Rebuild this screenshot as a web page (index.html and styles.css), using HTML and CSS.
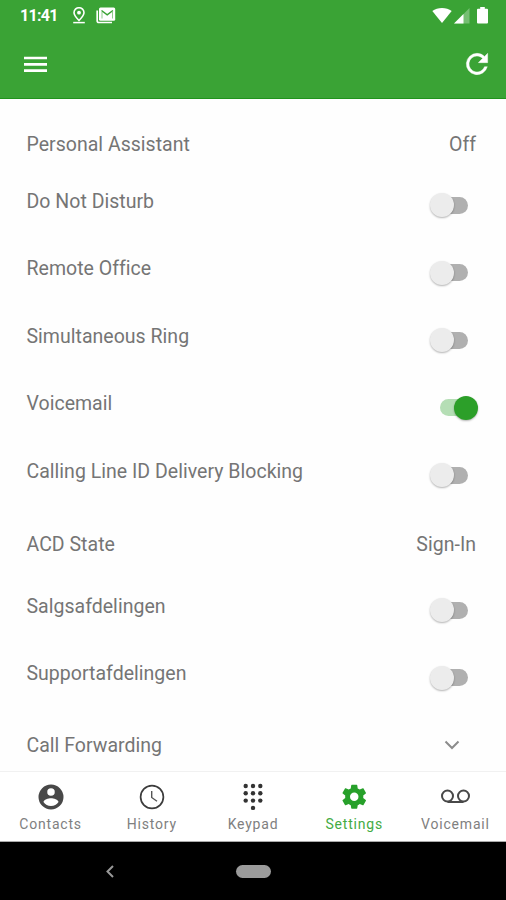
FILE: index.html
```html
<!DOCTYPE html>
<html lang="en">
<head>
    <meta charset="UTF-8">
    <meta name="viewport" content="width=device-width, initial-scale=1.0">
    <title>Settings</title>
    <link rel="stylesheet" href="styles.css">
</head>
<body>
    <header>
        <div class="status_bar">
            <span class="clock">11:41</span>
            <svg class="pin" width="14" height="18" viewBox="0 0 14 18">
                <path d="M7 13.500C4 10.300 2 8 2 5.700a5 5 0 0 1 10 0C12 8 10 10.300 7 13.500z" fill="none" stroke="#fff" stroke-width="1.600"/>
                <circle cx="7" cy="5.700" r="1.900" fill="#fff"/>
                <path d="M1.200 15.600h11.600" stroke="#fff" stroke-width="1.500"/>
            </svg>
            <svg class="mail" width="20" height="18" viewBox="0 0 20 18">
                <path d="M1.200 3.500v10.500a1.500 1.500 0 0 0 1.500 1.500H16" fill="none" stroke="#fff" stroke-width="1.700"/>
                <rect x="3" y=".500" width="16.200" height="13.200" rx="1.500" fill="#fff"/>
                <path d="M6 11.500V5M16.500 11.500V5" stroke="#3aa335" stroke-width=".800" opacity=".7"/>
                <path d="M5.500 3.500l5.700 4.300 5.700-4.300" fill="none" stroke="#3aa335" stroke-width="1.500"/>
            </svg>
            <span class="spacer"></span>
            <svg width="20" height="16" viewBox="0 0 20 16">
                <path d="M10 15L.300 3C5.500-.900 14.500-.900 19.700 3z" fill="#fff"/>
            </svg>
            <svg class="signal" width="16" height="16" viewBox="0 0 16 16">
                <path d="M0 15.500L15.500 0v15.500z" fill="#fff" opacity=".3"/>
                <path d="M0 15.500L9.500 6V15.500z" fill="#fff"/>
            </svg>
            <svg class="battery" width="11" height="17" viewBox="0 0 11 17">
                <path d="M3.200 0h4.600v1.800H10a1 1 0 0 1 1 1V15.500a1 1 0 0 1-1 1H1a1 1 0 0 1-1-1V2.800a1 1 0 0 1 1-1h2.200z" fill="#fff"/>
            </svg>
        </div>
        <div class="toolbar">
            <svg width="23" height="17" viewBox="0 0 23 17">
                <path d="M0 2h23M0 8.300h23M0 14.600h23" stroke="#fff" stroke-width="2.700"/>
            </svg>
            <svg width="32" height="32" viewBox="0 0 24 24">
                <path d="M17.650 6.350A7.958 7.958 0 0 0 12 4a8 8 0 1 0 7.730 10h-2.080A6 6 0 1 1 12 6c1.660 0 3.140.69 4.220 1.780L13 11h7V4z" fill="#fff" stroke="#fff" stroke-width=".3"/>
            </svg>
        </div>
    </header>

    <main>
        <div class="row first"><span>Personal Assistant</span><span>Off</span></div>
        <div class="row"><span>Do Not Disturb</span><i class="switch"></i></div>
        <div class="row"><span>Remote Office</span><i class="switch"></i></div>
        <div class="row"><span>Simultaneous Ring</span><i class="switch"></i></div>
        <div class="row"><span>Voicemail</span><i class="switch on"></i></div>
        <div class="row"><span>Calling Line ID Delivery Blocking</span><i class="switch"></i></div>
        <div class="row value"><span>ACD State</span><span>Sign-In</span></div>
        <div class="row"><span>Salgsafdelingen</span><i class="switch"></i></div>
        <div class="row"><span>Supportafdelingen</span><i class="switch"></i></div>
        <div class="row last">
            <span>Call Forwarding</span>
            <svg class="chevron" width="16" height="10" viewBox="0 0 16 10">
                <path d="M1.500 1.500L8 8l6.500-6.500" fill="none" stroke="#8c8c8c" stroke-width="2"/>
            </svg>
        </div>
    </main>

    <nav class="tabs">
        <div class="tab">
            <svg width="30" height="30" viewBox="0 0 24 24">
                <path d="M12 2a10 10 0 1 0 0 20 10 10 0 0 0 0-20zm0 3a3 3 0 1 1 0 6 3 3 0 0 1 0-6zm0 14.200a7.200 7.200 0 0 1-6-3.220c.030-1.990 4-3.080 6-3.080s5.970 1.090 6 3.080a7.200 7.200 0 0 1-6 3.220z" fill="#484848"/>
            </svg>
            <span>Contacts</span>
        </div>
        <div class="tab">
            <svg width="30" height="30" viewBox="0 0 30 30">
                <circle cx="15" cy="15" r="11.400" fill="none" stroke="#3c3c3c" stroke-width="1.700"/>
                <path d="M14.700 9v6.500l5.300 3.800" fill="none" stroke="#555" stroke-width="1.400"/>
            </svg>
            <span>History</span>
        </div>
        <div class="tab">
            <svg width="30" height="30" viewBox="0 0 30 30" fill="#333">
                <circle cx="7.700" cy="4" r="2.200"/><circle cx="15" cy="4" r="2.200"/><circle cx="22.300" cy="4" r="2.200"/>
                <circle cx="7.700" cy="11.300" r="2.200"/><circle cx="15" cy="11.300" r="2.200"/><circle cx="22.300" cy="11.300" r="2.200"/>
                <circle cx="7.700" cy="18.600" r="2.200"/><circle cx="15" cy="18.600" r="2.200"/><circle cx="22.300" cy="18.600" r="2.200"/>
                <circle cx="15" cy="25.900" r="2.200"/>
            </svg>
            <span>Keypad</span>
        </div>
        <div class="tab active">
            <svg width="30" height="30" viewBox="-.6 -.2 24.800 24.800">
                <path d="M19.430 12.980c.040-.320.070-.640.070-.980s-.030-.660-.070-.980l2.110-1.650c.190-.150.240-.420.120-.640l-2-3.460c-.120-.220-.390-.300-.610-.220l-2.490 1c-.520-.400-1.080-.730-1.690-.980l-.380-2.650A.488.488 0 0 0 14 2h-4c-.250 0-.460.180-.490.420l-.380 2.650c-.610.250-1.170.590-1.690.980l-2.490-1c-.230-.090-.490 0-.610.220l-2 3.460c-.130.220-.070.490.120.640l2.110 1.650c-.040.320-.070.650-.070.980s.030.660.070.980l-2.110 1.650c-.190.150-.240.420-.120.640l2 3.460c.120.220.390.300.610.220l2.490-1c.520.400 1.080.730 1.690.980l.380 2.650c.030.240.240.420.490.420h4c.250 0 .460-.180.490-.420l.380-2.650c.610-.250 1.170-.590 1.690-.980l2.490 1c.230.090.490 0 .610-.220l2-3.460c.120-.220.070-.490-.120-.640zM12 15.500a3.500 3.500 0 1 1 0-7 3.500 3.500 0 0 1 0 7z" fill="#27a02a"/>
            </svg>
            <span>Settings</span>
        </div>
        <div class="tab">
            <svg width="30" height="30" viewBox="0 0 30 30" fill="none" stroke="#484848" stroke-width="2">
                <circle cx="7.500" cy="14" r="5.500"/>
                <circle cx="23.500" cy="14" r="5.500"/>
                <path d="M7.500 20h16"/>
            </svg>
            <span>Voicemail</span>
        </div>
    </nav>

    <footer>
        <svg width="8" height="13" viewBox="0 0 8 13">
            <path d="M7 1L1.500 6.500 7 12" fill="none" stroke="#999" stroke-width="2"/>
        </svg>
        <div class="home"></div>
    </footer>
</body>
</html>
```

FILE: styles.css
```css
* {
    box-sizing: border-box;
}

body {
    margin: 0;
    height: 900px;
    display: flex;
    flex-direction: column;
    background-color: #fefefe;
    color: #757575;
    font-family: Roboto, sans-serif;
    overflow: hidden;
}

svg {
    display: block;
    flex: none;
}

header {
    height: 99px;
    background-color: #3aa335;
    border-bottom: 1px solid #20931c;
}

.status_bar {
    display: flex;
    align-items: center;
    height: 31px;
    padding: 0 18px 0 20px;
}

.clock {
    width: 52px;
    color: #fff;
    font-size: 16px;
    font-weight: 700;
    letter-spacing: -0.7px;
}

.mail {
    margin-left: 10px;
}

.spacer {
    flex: 1;
}

.signal {
    margin-left: 2px;
}

.battery {
    margin-left: 7px;
}

.toolbar {
    display: flex;
    align-items: center;
    justify-content: space-between;
    height: 66px;
    padding: 0 13px 0 23.5px;
}

main {
    flex: 1;
    padding-top: 21px;
}

.row {
    display: flex;
    align-items: center;
    justify-content: space-between;
    height: 67.5px;
    padding: 0 30px 0 26.5px;
    font-size: 19.5px;
    letter-spacing: 0.02px;
}

.row.first {
    height: 47.5px;
    padding-top: 1px;
}

.row.value {
    padding-top: 11px;
}

.row.last {
    height: 63px;
    padding-top: 12px;
}

.switch {
    position: relative;
    width: 28px;
    height: 17px;
    margin-top: 8px;
    margin-right: 8px;
    border-radius: 9px;
    background-color: #b0b0b0;
}

.switch::before {
    content: "";
    position: absolute;
    top: -3.5px;
    left: -10px;
    width: 24px;
    height: 24px;
    border-radius: 50%;
    background-color: #ececec;
    box-shadow: 0 1px 2px rgba(0, 0, 0, 0.3);
}

.switch.on {
    background-color: #b5deb5;
}

.switch.on::before {
    left: 14px;
    background-color: #2c9f29;
}

.chevron {
    margin-right: 16px;
}

.tabs {
    display: flex;
    height: 71px;
    border-top: 1px solid #f1f1f1;
    border-bottom: 1px solid #aaa;
    background-color: #fff;
}

.tab {
    flex: 1;
    display: flex;
    flex-direction: column;
    align-items: center;
    padding-top: 10px;
    color: #808080;
    font-size: 14px;
    line-height: 16px;
    letter-spacing: 0.8px;
}

.tab span {
    margin-top: 4px;
}

.tab.active {
    color: #43ab43;
}

footer {
    display: flex;
    align-items: center;
    height: 58px;
    padding-left: 106px;
    background-color: #000;
}

.home {
    width: 35px;
    height: 13px;
    margin-left: 122px;
    border-radius: 7px;
    background-color: #9b9b9b;
}
```
